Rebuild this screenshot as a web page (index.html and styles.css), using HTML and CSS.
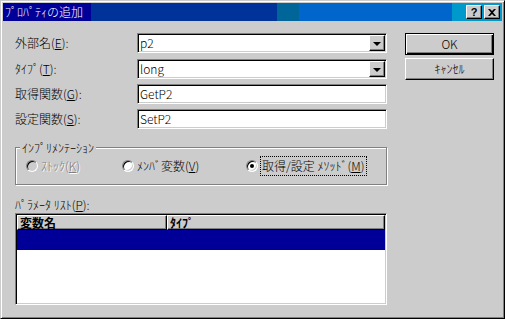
FILE: index.html
```html
<!DOCTYPE html>
<html lang="ja">
<head>
    <meta charset="UTF-8">
    <meta name="viewport" content="width=device-width, initial-scale=1.0">
    <title>ﾌﾟﾛﾊﾟﾃｨの追加</title>
    <link rel="stylesheet" href="styles.css">
</head>
<body>
    <div class="window">
        <div class="titlebar">
            <span class="title">ﾌﾟﾛﾊﾟﾃｨの追加</span>
            <div class="caption-buttons">
                <span class="cap-btn help">?</span>
                <span class="cap-btn">
                    <svg width="8" height="7" viewBox="0 0 8 7"><path d="M0 0h2l2 2 2-2h2L5 3.5 8 7H6L4 5 2 7H0l3-3.5z" fill="#000"/></svg>
                </span>
            </div>
        </div>
        <div class="client">
            <div class="main">
                <div class="fields">
                    <label>外部名(<u>E</u>):</label>
                    <div class="combo"><span class="value">p2</span><span class="drop"><span class="arrow"></span></span></div>
                    <label>ﾀｲﾌﾟ(<u>T</u>):</label>
                    <div class="combo"><span class="value">long</span><span class="drop"><span class="arrow"></span></span></div>
                    <label>取得関数(<u>G</u>):</label>
                    <div class="textbox"><span class="value">GetP2</span></div>
                    <label>設定関数(<u>S</u>):</label>
                    <div class="textbox"><span class="value">SetP2</span></div>
                </div>

                <fieldset class="group">
                    <legend>ｲﾝﾌﾟﾘﾒﾝﾃｰｼｮﾝ</legend>
                    <div class="radios">
                        <div class="radio disabled"><span class="circle"></span><span class="radio-text">ｽﾄｯｸ(<u>K</u>)</span></div>
                        <div class="radio second"><span class="circle"></span><span class="radio-text">ﾒﾝﾊﾞ変数(<u>V</u>)</span></div>
                        <div class="radio"><span class="circle checked"></span><span class="radio-text focus">取得/設定 ﾒｿｯﾄﾞ(<u>M</u>)</span></div>
                    </div>
                </fieldset>

                <div class="param-label">ﾊﾟﾗﾒｰﾀ ﾘｽﾄ(<u>P</u>):</div>
                <div class="listbox">
                    <div class="list-header">
                        <span class="col col-name">変数名</span>
                        <span class="col col-type">ﾀｲﾌﾟ</span>
                    </div>
                    <div class="list-row selected"></div>
                </div>
            </div>
            <div class="side">
                <button class="btn default">OK</button>
                <button class="btn">ｷｬﾝｾﾙ</button>
            </div>
        </div>
    </div>
</body>
</html>
```

FILE: styles.css
```css
body {
    margin: 0;
    font-family: "Noto Sans CJK JP", "Liberation Sans", sans-serif;
    font-size: 12px;
    font-weight: 300;
    color: #000;
}
u {
    text-decoration-thickness: 1px;
    text-underline-offset: 1px;
}
.window {
    width: 505px;
    height: 319px;
    box-sizing: border-box;
    background: #cccccc;
    border: 1px solid;
    border-color: #cccccc #000 #000 #cccccc;
    box-shadow: inset 1px 1px #fff, inset -1px -1px #808080;
    padding: 2px;
    display: flex;
    flex-direction: column;
}
.titlebar {
    height: 18px;
    flex: none;
    display: flex;
    align-items: center;
    padding: 0 2px;
    color: #fff;
    background: linear-gradient(to right,
        #000099 0 88px, #003399 88px 274px, #006699 274px 296px,
        #0066cc 296px 449px, #0099cc 449px);
}
.title {
    line-height: 14px;
}
.caption-buttons {
    margin-left: auto;
    display: flex;
    gap: 2px;
}
.cap-btn {
    width: 16px;
    height: 14px;
    box-sizing: border-box;
    background: #cccccc;
    border: 1px solid;
    border-color: #fff #000 #000 #fff;
    box-shadow: inset -1px -1px #808080;
    display: flex;
    align-items: center;
    justify-content: center;
    color: #000;
}
.cap-btn.help {
    font-family: "Liberation Sans", sans-serif;
    font-weight: bold;
    font-size: 11px;
    line-height: 11px;
}
.client {
    flex: 1;
    display: flex;
    padding: 12px 0 0 12px;
}
.main {
    width: 372px;
}
.fields {
    display: grid;
    grid-template-columns: 122px 250px;
    grid-template-rows: 21px 20px 20px 20px;
    row-gap: 5px;
}
.fields label {
    align-self: start;
    line-height: 20px;
}
.combo,
.textbox {
    height: 20px;
    box-sizing: border-box;
    background: #fff;
    border: 1px solid;
    border-color: #808080 #fff #fff #808080;
    box-shadow: inset 1px 1px #000, inset -1px -1px #cccccc;
    padding: 1px;
    display: flex;
    align-items: center;
}
.value {
    padding-left: 1px;
    line-height: 16px;
}
.drop {
    margin-left: auto;
    width: 16px;
    height: 16px;
    box-sizing: border-box;
    background: #cccccc;
    border: 1px solid;
    border-color: #fff #000 #000 #fff;
    box-shadow: inset -1px -1px #808080;
    display: flex;
    align-items: center;
    justify-content: center;
}
.arrow {
    width: 0;
    height: 0;
    border-left: 4px solid transparent;
    border-right: 4px solid transparent;
    border-top: 4px solid #000;
    margin-top: 1px;
}
.group {
    margin: 12px 0 0;
    padding: 2px 0 8px 10px;
    min-width: 0;
    border: 1px solid #808080;
    box-shadow: inset 1px 1px #fff, 1px 1px #fff;
}
.group legend {
    margin-left: -6px;
    padding: 0 2px;
    line-height: 13px;
    background: #cccccc;
}
.radios {
    display: flex;
    align-items: center;
    height: 20px;
}
.radio {
    display: flex;
    align-items: center;
    width: 96px;
}
.radio.second {
    width: 124px;
}
.radio:last-child {
    width: auto;
}
.circle {
    width: 12px;
    height: 12px;
    box-sizing: border-box;
    border-radius: 50%;
    background: #fff;
    border: 1px solid;
    border-color: #808080 #fff #fff #808080;
    box-shadow: inset 1px 1px #000, inset -1px -1px #cccccc;
    display: flex;
    align-items: center;
    justify-content: center;
}
.checked::after {
    content: "";
    width: 4px;
    height: 4px;
    border-radius: 50%;
    background: #000;
}
.radio-text {
    margin-left: 3px;
    line-height: 16px;
}
.disabled .circle {
    background: #cccccc;
}
.disabled .radio-text {
    color: #808080;
    text-shadow: 1px 1px #fff;
}
.focus {
    border: 1px dotted #000;
    padding: 1px 2px 1px 1px;
    margin-left: 2px;
}
.param-label {
    margin-top: 13px;
    line-height: 13px;
}
.listbox {
    margin-top: 2px;
    height: 92px;
    box-sizing: border-box;
    background: #fff;
    border: 1px solid;
    border-color: #808080 #fff #fff #808080;
    box-shadow: inset 1px 1px #000, inset -1px -1px #cccccc;
    padding: 1px;
}
.list-header {
    display: flex;
    height: 15px;
}
.col {
    box-sizing: border-box;
    background: #cccccc;
    border: 1px solid;
    border-color: #fff #000 #000 #fff;
    box-shadow: inset -1px -1px #808080;
    font-weight: bold;
    line-height: 13px;
    padding-left: 2px;
}
.col-name {
    width: 150px;
}
.col-type {
    flex: 1;
}
.list-row {
    height: 20px;
}
.list-row.selected {
    background: #000099;
}
.side {
    margin-left: 18px;
    display: flex;
    flex-direction: column;
    gap: 3px;
}
.btn {
    width: 89px;
    height: 22px;
    box-sizing: border-box;
    font-family: inherit;
    font-size: 12px;
    font-weight: inherit;
    color: #000;
    background: #cccccc;
    border: 1px solid;
    border-color: #fff #000 #000 #fff;
    box-shadow: inset -1px -1px #808080;
    padding: 0;
    line-height: 18px;
}
.btn.default {
    border-color: #000;
    box-shadow: inset 1px 1px #fff, inset -1px -1px #000, inset -2px -2px #808080;
}
```
